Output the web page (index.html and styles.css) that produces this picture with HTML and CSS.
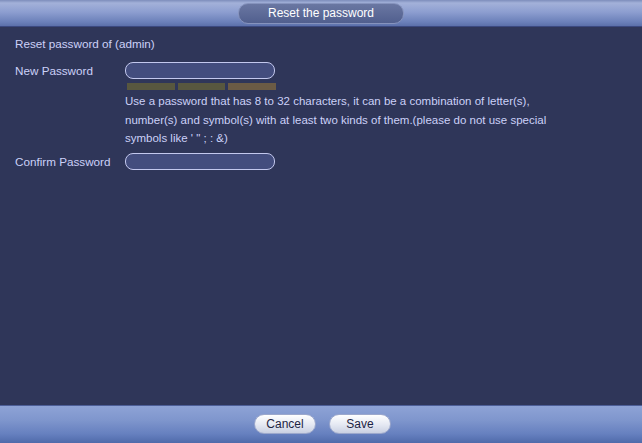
FILE: index.html
```html
<!DOCTYPE html>
<html>
<head>
<meta charset="utf-8">
<link rel="stylesheet" href="styles.css">
</head>
<body>
<div class="window">
  <div class="header">
    <div class="title-pill">Reset the password</div>
  </div>
  <div class="main">
    <div class="caption">Reset password of (admin)</div>
    <div class="row row-new">
      <div class="label">New Password</div>
      <div class="field">
        <div class="input"></div>
        <div class="strength">
          <span class="seg"></span><span class="seg"></span><span class="seg seg-last"></span>
        </div>
        <div class="help">Use a password that has 8 to 32 characters, it can be a combination of letter(s), number(s) and symbol(s) with at least two kinds of them.(please do not use special symbols like ' " ; : &amp;)</div>
      </div>
    </div>
    <div class="row row-confirm">
      <div class="label">Confirm Password</div>
      <div class="field">
        <div class="input"></div>
      </div>
    </div>
  </div>
  <div class="footer">
    <button class="btn">Cancel</button>
    <button class="btn">Save</button>
  </div>
</div>
</body>
</html>
```
FILE: styles.css
```css
html, body {
  margin: 0;
  padding: 0;
}
body {
  width: 642px;
  height: 443px;
  overflow: hidden;
  font-family: "Liberation Sans", Arial, sans-serif;
  font-size: 12px;
  background: #2f3659;
}
.window {
  display: flex;
  flex-direction: column;
  height: 443px;
}
.header {
  height: 26px;
  flex: none;
  display: flex;
  justify-content: center;
  align-items: flex-start;
  background: linear-gradient(to bottom, #7d8dbb 0px, #a3b1d9 3px, #8d9ed0 12px, #6b80b9 22px, #5c70aa 26px);
  border-bottom: 1px solid #3b4980;
}
.title-pill {
  margin-top: 3px;
  width: 164px;
  height: 19px;
  line-height: 19px;
  text-align: center;
  color: #ffffff;
  border-radius: 10px;
  border: 1px solid #8693bd;
  background: linear-gradient(to bottom, #6a77a2, #515f8e);
  box-sizing: content-box;
}
.main {
  flex: 1;
  padding: 8px 0 0 15px;
  color: #ccd1f8;
  background: #2f3659;
  font-size: 11.7px;
}
.caption {
  line-height: 18px;
}
.row {
  display: flex;
}
.row-new {
  margin-top: 9px;
}
.row-confirm {
  margin-top: 5px;
}
.label {
  width: 110px;
  flex: none;
  line-height: 18px;
}
.field {
  display: flex;
  flex-direction: column;
}
.input {
  width: 148px;
  height: 15px;
  border: 1.5px solid #c3c8ee;
  border-radius: 8px;
  background: #434d7e;
}
.strength {
  display: flex;
  gap: 3px;
  margin: 4px 0 0 2px;
  height: 7px;
}
.seg {
  width: 47.5px;
  height: 7px;
  background: #58573f;
}
.seg-last {
  background: #6b5b45;
}
.help {
  margin-top: 2px;
  width: 440px;
  line-height: 18.5px;
  font-size: 11.5px;
}
.footer {
  height: 37px;
  flex: none;
  display: flex;
  justify-content: center;
  align-items: flex-start;
  gap: 13px;
  padding-left: 3px;
  border-top: 1px solid #4d5f98;
  background: linear-gradient(to bottom, #8ea3d6 0px, #7f96cd 14px, #6680bf 28px, #4f6aaa 37px);
}
.btn {
  margin-top: 8px;
  width: 62px;
  height: 20px;
  padding: 0;
  border: 1px solid #9ca8cc;
  border-radius: 10px;
  background: linear-gradient(to bottom, #ffffff, #e4e8f2 55%, #c9d0e2);
  color: #1e2443;
  font-family: "Liberation Sans", Arial, sans-serif;
  font-size: 12px;
  line-height: 18px;
}
```
